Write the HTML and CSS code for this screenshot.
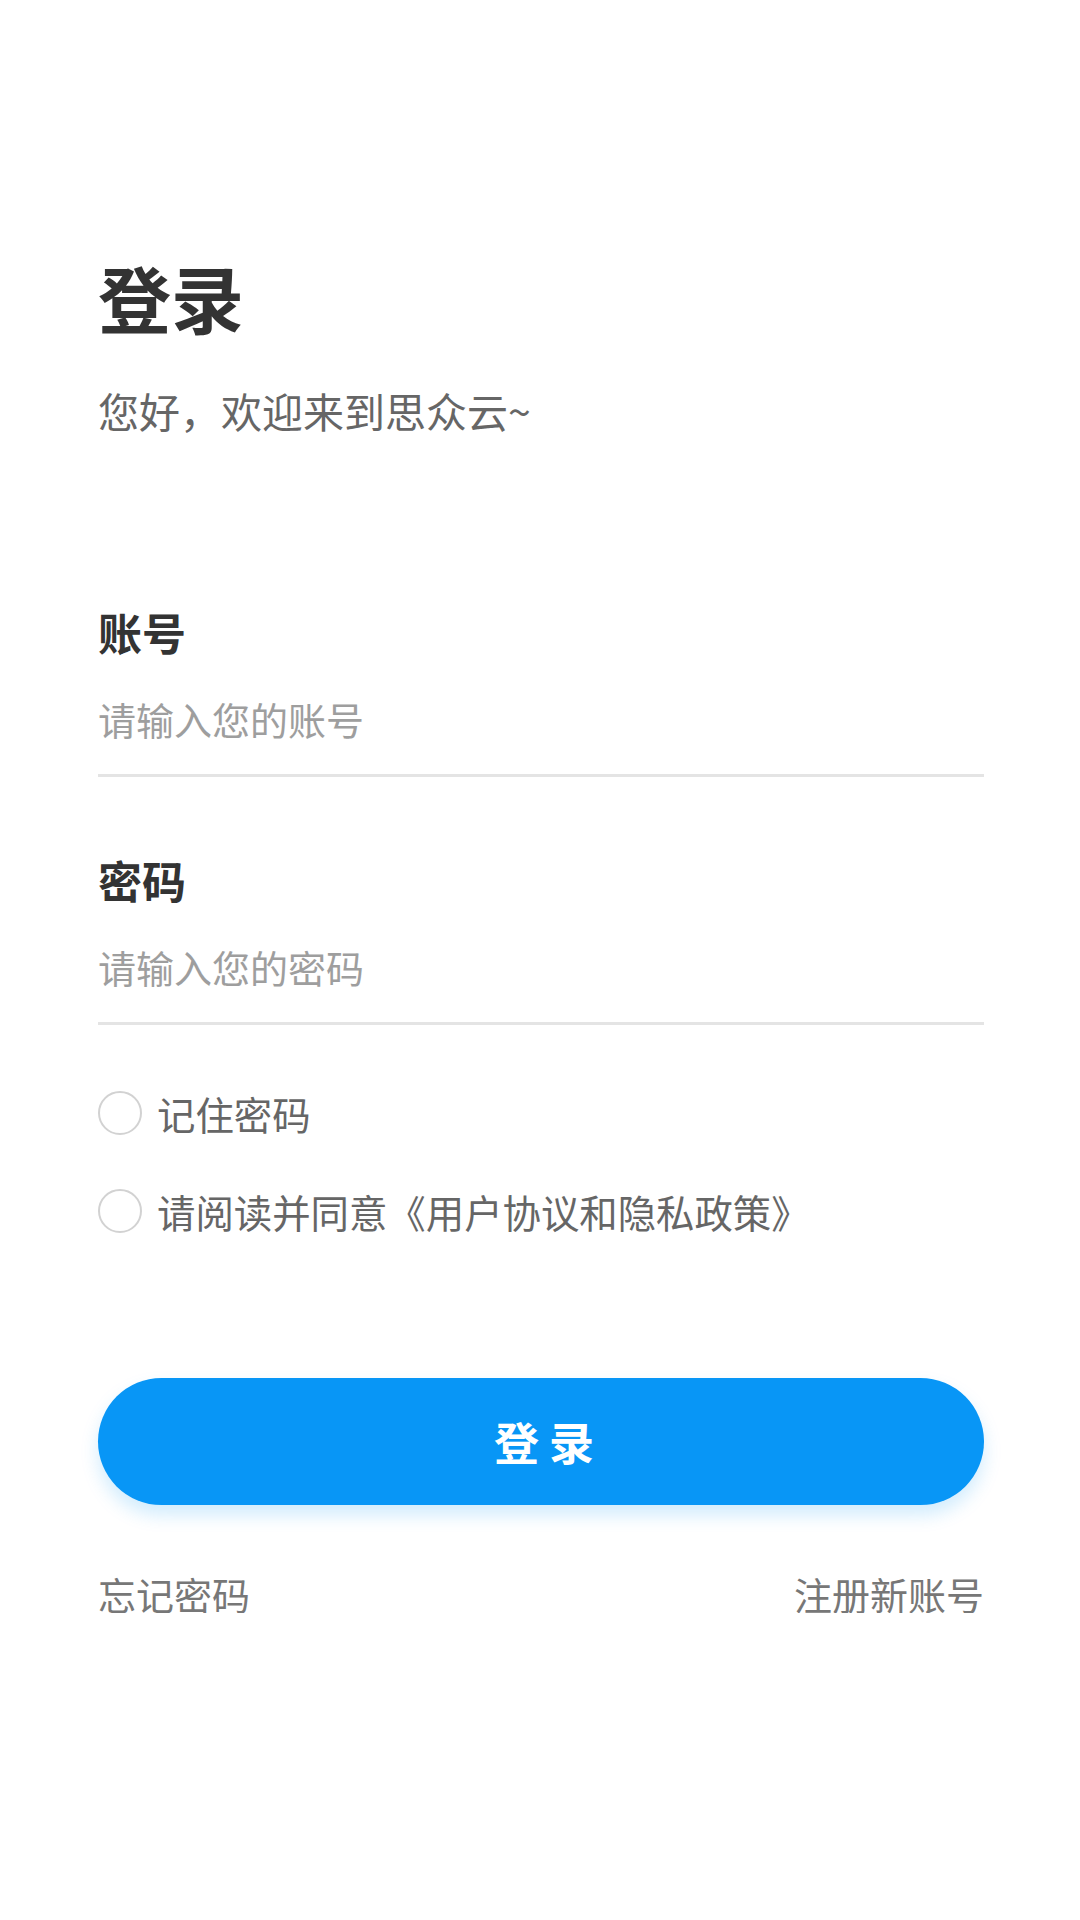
FILE: index.html
```html
<!DOCTYPE html>
<html lang="zh-CN">
<head>
    <meta charset="UTF-8">
    <meta name="viewport" content="width=device-width, initial-scale=1.0">
    <title>登录</title>
    <link rel="stylesheet" href="styles.css">
</head>
<body>

    <div class="login">
        <!-- Heading -->
        <h1 class="title">登录</h1>
        <p class="welcome">您好，欢迎来到思众云~</p>

        <!-- Fields -->
        <form class="form" onsubmit="return false">
            <div class="field first">
                <label for="account">账号</label>
                <input type="text" id="account" placeholder="请输入您的账号">
            </div>
            <div class="field">
                <label for="password">密码</label>
                <input type="password" id="password" placeholder="请输入您的密码">
            </div>

            <div class="check remember">
                <span class="circle"></span>
                <span>记住密码</span>
            </div>
            <div class="check agree">
                <span class="circle"></span>
                <span>请阅读并同意《用户协议和隐私政策》</span>
            </div>

            <button type="submit" class="submit">登录</button>
        </form>

        <!-- Links -->
        <div class="links">
            <a href="#">忘记密码</a>
            <a href="#">注册新账号</a>
        </div>
    </div>

</body>
</html>
```

FILE: styles.css
```css
/* General Styles */
body {
    margin: 0;
    padding: 0;
    background: #fff;
    font-family: "Noto Sans CJK SC", "Noto Sans", sans-serif;
}

.login {
    padding: 260px 96px 0 98px;
}

.title {
    margin: 0;
    font-size: 73px;
    line-height: 72px;
    font-weight: bold;
    color: #333;
}

.welcome {
    margin: 58px 0 0;
    font-size: 41px;
    line-height: 40px;
    color: #666;
}

/* Fields */
.field {
    margin-top: 81px;
}

.field.first {
    margin-top: 180px;
}

.field label {
    display: block;
    font-size: 44px;
    line-height: 44px;
    font-weight: bold;
    color: #333;
}

.field input {
    display: block;
    width: 100%;
    box-sizing: border-box;
    height: 78px;
    margin-top: 45px;
    padding: 0 0 37px;
    border: none;
    border-bottom: 3px solid #e4e4e4;
    outline: none;
    font-family: inherit;
    font-size: 38px;
    line-height: 38px;
    color: #333;
    background: transparent;
}

.field input::placeholder {
    color: #9e9e9e;
}

/* Checkboxes */
.check {
    display: flex;
    align-items: center;
    font-size: 38.4px;
    line-height: 38px;
    color: #666;
}

.check.remember {
    margin-top: 66px;
}

.check.agree {
    margin-top: 54px;
}

.circle {
    width: 40px;
    height: 40px;
    border: 2px solid #d2d2d2;
    border-radius: 50%;
    margin-right: 15px;
    flex-shrink: 0;
}

/* Button */
.submit {
    display: block;
    width: 100%;
    height: 127px;
    margin-top: 145px;
    border: none;
    border-radius: 64px;
    background: #0896f6;
    color: #fff;
    font-family: inherit;
    font-size: 45px;
    font-weight: bold;
    letter-spacing: 10px;
    text-indent: 16px;
    box-shadow: 0 10px 18px rgba(8, 150, 246, 0.18);
    cursor: pointer;
}

/* Links */
.links {
    display: flex;
    justify-content: space-between;
    margin-top: 70px;
    font-size: 38px;
    line-height: 38px;
}

.links a {
    color: #777;
    text-decoration: none;
}
```
